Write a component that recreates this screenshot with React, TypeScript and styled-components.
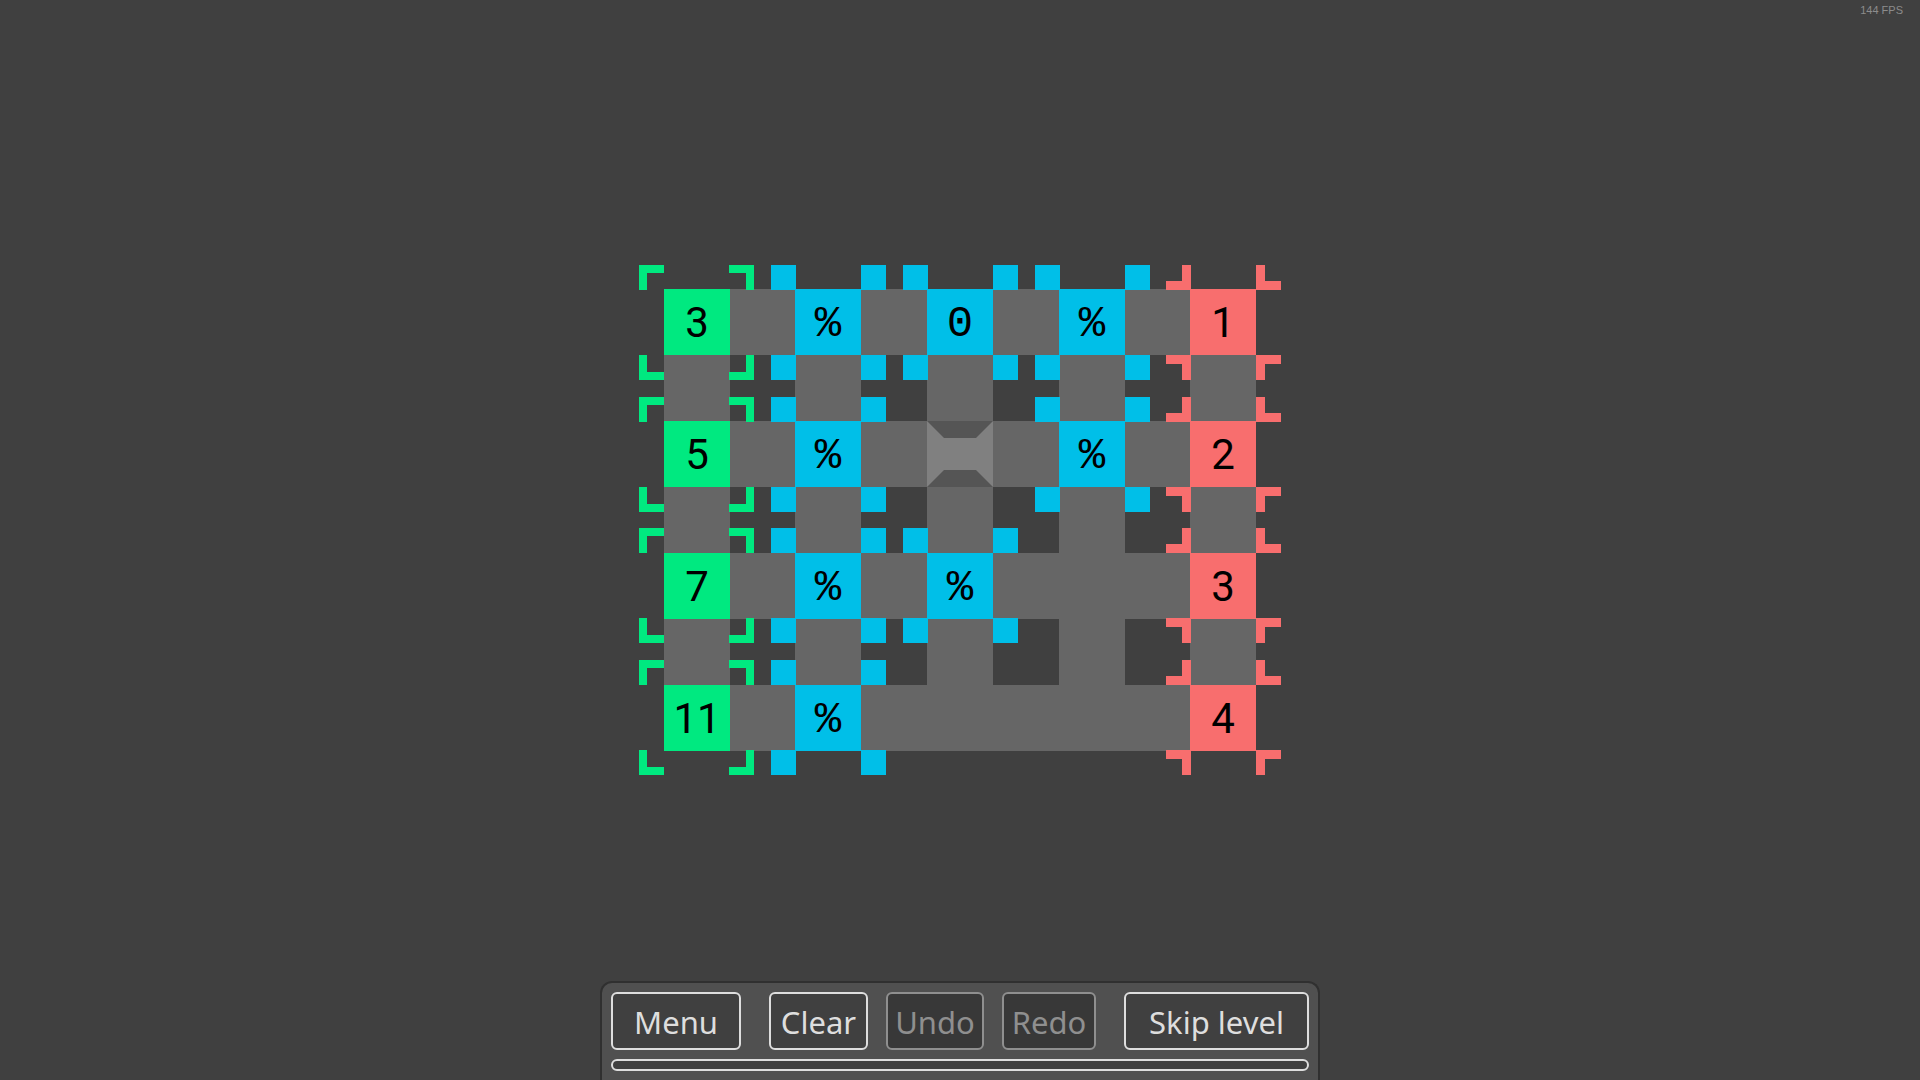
import React from "react";
import styled, { createGlobalStyle, css } from "styled-components";

const colors = {
  page: "#404040",
  path: "#666666",
  input: "#00e980",
  operator: "#00bfe8",
  output: "#f86e6e",
  panel: "#505050",
  panelEdge: "#303030",
  line: "#dedede",
};

const GlobalStyle = createGlobalStyle`
  *, *::before, *::after { box-sizing: border-box; }
  body { margin: 0; background: ${colors.page}; }
`;

const Screen = styled.div`
  display: flex;
  flex-direction: column;
  align-items: center;
  min-height: 100vh;
  background: ${colors.page};
`;

const StatusBar = styled.header`
  align-self: stretch;
  padding: 3px 17px 4px;
  text-align: right;
  font: 11px/14px "Liberation Sans", Arial, sans-serif;
  color: #8c8c8c;
`;

const Stage = styled.main`
  flex: 1;
  display: flex;
  align-items: center;
  justify-content: center;
  padding-top: 38px;
`;

const Board = styled.div`
  display: grid;
  grid-template-columns: 66px 65px 66px 66px 66px 66px 66px 65px 66px;
  grid-auto-rows: 66px;
`;

const Gap = styled.div``;

const Path = styled.div`
  background: ${colors.path};
`;

type Kind = "input" | "operator" | "output";

const Tile = styled.button<{ $kind: Kind }>`
  position: relative;
  z-index: 1;
  display: flex;
  align-items: center;
  justify-content: center;
  border: 0;
  background: ${(p) => colors[p.$kind]};
  color: #000;
  ${(p) =>
    p.$kind === "operator"
      ? css`
          padding: 4px 0 0;
          font: 44px/62px "Liberation Mono", monospace;
        `
      : css`
          padding: 2px 0 0;
          font: 42px/62px Roboto, sans-serif;
        `}
`;

const Brackets = styled.span<{ $kind: Kind; $lower: boolean }>`
  position: absolute;
  top: ${(p) => (p.$lower ? -25 : -24)}px;
  bottom: ${(p) => (p.$lower ? -24 : -25)}px;
  left: ${(p) => (p.$kind === "input" ? -25 : -24)}px;
  right: ${(p) => (p.$kind === "input" ? -24 : -25)}px;
  display: grid;
  grid-template-columns: 25px 25px;
  grid-template-rows: 25px 25px;
  place-content: space-between;
  pointer-events: none;
`;

const Corner = styled.span<{ $kind: Kind; $top: boolean; $left: boolean }>`
  ${(p) => {
    if (p.$kind === "operator") return `background: ${colors.operator};`;
    const outward = p.$kind === "input";
    const vertical = p.$top === outward ? "top" : "bottom";
    const horizontal = p.$left === outward ? "left" : "right";
    const stroke = outward ? 8 : 9;
    return `
      border: 0 solid ${colors[p.$kind]};
      border-${vertical}-width: ${stroke}px;
      border-${horizontal}-width: ${stroke}px;
    `;
  }}
`;

const BridgeArt = styled.svg`
  display: block;
  width: 100%;
  height: 100%;
`;

const Panel = styled.footer`
  display: flex;
  flex-direction: column;
  gap: 9px;
  padding: 9px;
  border: 2px solid ${colors.panelEdge};
  border-bottom: 0;
  border-radius: 12px 12px 0 0;
  background: ${colors.panel};
`;

const Toolbar = styled.div`
  display: flex;
  gap: 28px;
`;

const ToolGroup = styled.div`
  display: flex;
  gap: 18px;
`;

const ToolButton = styled.button<{ $width: number }>`
  width: ${(p) => p.$width}px;
  height: 58px;
  padding: 2px 0 0;
  border: 2px solid ${colors.line};
  border-radius: 6px;
  background: ${colors.page};
  color: ${colors.line};
  font: 31px/40px "Noto Sans", sans-serif;
  white-space: nowrap;

  &:disabled {
    border-color: #8f8f8f;
    background: #383838;
    color: #8f8f8f;
  }
`;

const LevelProgress = styled.progress`
  display: block;
  appearance: none;
  width: 100%;
  height: 12px;
  border: 2px solid ${colors.line};
  border-radius: 6px;
  background: ${colors.page};
  overflow: hidden;

  &::-webkit-progress-bar {
    background: transparent;
  }
  &::-webkit-progress-value {
    background: ${colors.line};
  }
`;

const level: string[][] = [
  ["3", "%", "0", "%", "1"],
  ["5", "%", "bridge", "%", "2"],
  ["7", "%", "%", "", "3"],
  ["11", "%", "", "", "4"],
];

function Block({ kind, label, lower }: { kind: Kind; label: string; lower: boolean }) {
  return (
    <Tile $kind={kind} type="button">
      {label}
      <Brackets $kind={kind} $lower={lower} aria-hidden="true">
        <Corner $kind={kind} $top $left />
        <Corner $kind={kind} $top $left={false} />
        <Corner $kind={kind} $top={false} $left />
        <Corner $kind={kind} $top={false} $left={false} />
      </Brackets>
    </Tile>
  );
}

function Bridge() {
  return (
    <Path>
      <BridgeArt viewBox="0 0 66 66" aria-hidden="true">
        <path d="M0 0H66V66H0Z" fill="#808080" />
        <path d="M0 0H66L49 17H17ZM0 66L17 49H49L66 66Z" fill="#555555" />
      </BridgeArt>
    </Path>
  );
}

function renderCell(row: number, column: number) {
  const key = `${row}-${column}`;
  if (row % 2 && column % 2) return <Gap key={key} />;
  if (row % 2 || column % 2) return <Path key={key} />;
  const label = level[row / 2][column / 2];
  if (label === "bridge") return <Bridge key={key} />;
  if (!label) return <Path key={key} />;
  const kind: Kind = column === 0 ? "input" : column === 8 ? "output" : "operator";
  return <Block key={key} kind={kind} label={label} lower={row >= 4} />;
}

export default function App() {
  return (
    <Screen>
      <GlobalStyle />
      <StatusBar>144 FPS</StatusBar>
      <Stage>
        <Board>
          {Array.from({ length: 7 }, (_, row) =>
            Array.from({ length: 9 }, (_, column) => renderCell(row, column))
          )}
        </Board>
      </Stage>
      <Panel>
        <Toolbar>
          <ToolButton type="button" $width={130}>Menu</ToolButton>
          <ToolGroup>
            <ToolButton type="button" $width={99}>Clear</ToolButton>
            <ToolButton type="button" $width={98} disabled>Undo</ToolButton>
            <ToolButton type="button" $width={94} disabled>Redo</ToolButton>
          </ToolGroup>
          <ToolButton type="button" $width={185}>Skip level</ToolButton>
        </Toolbar>
        <LevelProgress value={0} max={100} aria-label="Level progress" />
      </Panel>
    </Screen>
  );
}
